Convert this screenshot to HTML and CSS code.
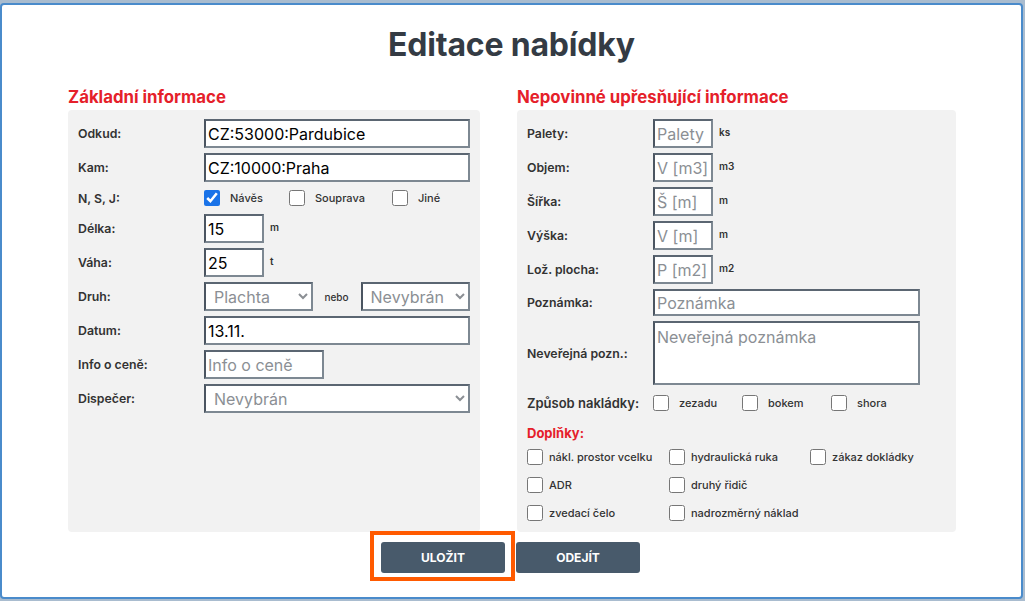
FILE: index.html
```html
<!DOCTYPE html>
<html lang="cs">
<head>
  <meta charset="UTF-8">
  <title>Editace nabídky</title>
  <link rel="stylesheet" href="styles.css">
</head>
<body>

  <div class="modal">
    <h1 class="modal-title">Editace nabídky</h1>

    <div class="columns">

      <!-- Základní informace -->
      <section class="column">
        <h2 class="section-title">Základní informace</h2>
        <div class="panel panel-left">
          <div class="row">
            <label class="label">Odkud:</label>
            <input class="field wide" type="text" value="CZ:53000:Pardubice">
          </div>
          <div class="row">
            <label class="label">Kam:</label>
            <input class="field wide" type="text" value="CZ:10000:Praha">
          </div>
          <div class="row row-check">
            <label class="label">N, S, J:</label>
            <label class="check c-naves"><input type="checkbox" checked><span>Návěs</span></label>
            <label class="check c-souprava"><input type="checkbox"><span>Souprava</span></label>
            <label class="check"><input type="checkbox"><span>Jiné</span></label>
          </div>
          <div class="row">
            <label class="label">Délka:</label>
            <input class="field small" type="text" value="15">
            <span class="unit">m</span>
          </div>
          <div class="row">
            <label class="label">Váha:</label>
            <input class="field small" type="text" value="25">
            <span class="unit">t</span>
          </div>
          <div class="row">
            <label class="label">Druh:</label>
            <select class="field select half"><option>Plachta</option></select>
            <span class="nebo">nebo</span>
            <select class="field select half"><option>Nevybrán</option></select>
          </div>
          <div class="row">
            <label class="label">Datum:</label>
            <input class="field wide" type="text" value="13.11.">
          </div>
          <div class="row">
            <label class="label">Info o ceně:</label>
            <input class="field medium" type="text" placeholder="Info o ceně">
          </div>
          <div class="row">
            <label class="label">Dispečer:</label>
            <select class="field select wide"><option>Nevybrán</option></select>
          </div>
        </div>
      </section>

      <!-- Nepovinné informace -->
      <section class="column">
        <h2 class="section-title">Nepovinné upřesňující informace</h2>
        <div class="panel panel-right">
          <div class="row">
            <label class="label">Palety:</label>
            <input class="field small" type="text" placeholder="Palety">
            <span class="unit">ks</span>
          </div>
          <div class="row">
            <label class="label">Objem:</label>
            <input class="field small" type="text" placeholder="V [m3]">
            <span class="unit">m3</span>
          </div>
          <div class="row">
            <label class="label">Šířka:</label>
            <input class="field small" type="text" placeholder="Š [m]">
            <span class="unit">m</span>
          </div>
          <div class="row">
            <label class="label">Výška:</label>
            <input class="field small" type="text" placeholder="V [m]">
            <span class="unit">m</span>
          </div>
          <div class="row">
            <label class="label">Lož. plocha:</label>
            <input class="field small" type="text" placeholder="P [m2]">
            <span class="unit">m2</span>
          </div>
          <div class="row">
            <label class="label">Poznámka:</label>
            <input class="field wide note" type="text" placeholder="Poznámka">
          </div>
          <div class="row">
            <label class="label">Neveřejná pozn.:</label>
            <textarea class="field wide area" placeholder="Neveřejná poznámka"></textarea>
          </div>
          <div class="row row-check">
            <label class="label label-big">Způsob nakládky:</label>
            <label class="check c-load"><input type="checkbox"><span>zezadu</span></label>
            <label class="check c-load"><input type="checkbox"><span>bokem</span></label>
            <label class="check"><input type="checkbox"><span>shora</span></label>
          </div>

          <p class="sub-title">Doplňky:</p>
          <div class="extras">
            <label class="check"><input type="checkbox"><span>nákl. prostor vcelku</span></label>
            <label class="check"><input type="checkbox"><span>hydraulická ruka</span></label>
            <label class="check"><input type="checkbox"><span>zákaz dokládky</span></label>
            <label class="check"><input type="checkbox"><span>ADR</span></label>
            <label class="check"><input type="checkbox"><span>druhý řidič</span></label>
            <span></span>
            <label class="check"><input type="checkbox"><span>zvedací čelo</span></label>
            <label class="check"><input type="checkbox"><span>nadrozměrný náklad</span></label>
          </div>
        </div>
      </section>
    </div>

    <div class="actions">
      <div class="btn-wrap">
        <button class="btn" type="submit">ULOŽIT</button>
        <span class="highlight"></span>
      </div>
      <button class="btn" type="button">ODEJÍT</button>
    </div>
  </div>

</body>
</html>
```

FILE: styles.css
```css
* {
  box-sizing: border-box;
}

body {
  margin: 0;
  padding: 3px 0 0 0;
  height: 601px;
  overflow: hidden;
  font-family: 'Inter', 'Noto Sans', sans-serif;
  background: #a9bccf;
  color: #333;
}

.modal {
  width: 1023px;
  height: 596px;
  background: #fff;
  border: 2px solid #4a8bcb;
  border-radius: 4px;
}

.modal-title {
  margin: 0;
  padding-top: 20px;
  text-align: center;
  font-size: 32px;
  line-height: 40px;
  font-weight: 700;
  color: #343b44;
  letter-spacing: -0.2px;
}

.columns {
  display: grid;
  grid-template-columns: 412px 439px;
  column-gap: 37px;
  padding-left: 66px;
  margin-top: 22px;
}

.column {
  display: flex;
  flex-direction: column;
}

.section-title {
  margin: 0 0 3px 0;
  font-size: 16.8px;
  line-height: 20px;
  font-weight: 700;
  color: #e5202a;
}

.panel {
  height: 422px;
  background: #f2f2f2;
  border-radius: 4px;
  padding: 9px 10px 0 10px;
  display: flex;
  flex-direction: column;
  gap: 5px;
}

.row {
  display: flex;
  align-items: center;
}

.label {
  flex: 0 0 126px;
  font-size: 12.3px;
  font-weight: 600;
  color: #333;
}

.label-big {
  font-size: 13px;
}

.field {
  height: 29px;
  font-family: 'Inter', 'Noto Sans', sans-serif;
  font-size: 16px;
  color: #000;
  background: #fff;
  border: 2px solid #7d8892;
  border-top-color: #5b6672;
  border-left-color: #4b5561;
  border-radius: 0;
  padding: 0 2px;
  outline: none;
}

.field::placeholder {
  color: #8b8f94;
  font-weight: 400;
}

.wide {
  width: 268px;
}

.panel-right .wide {
  width: 267px;
}

.small {
  width: 60px;
}

.medium {
  width: 120px;
}

.half {
  width: 110px;
}

.note {
  height: 27px;
}

.area {
  height: 64px;
  resize: none;
  padding: 4px 2px;
}

.select {
  color: #8b8f94;
  padding: 0 4px;
}

.unit {
  margin-left: 6px;
  font-size: 10px;
  font-weight: 600;
  margin-bottom: 4px;
}

.nebo {
  margin: 0 12px 0 11px;
  font-size: 10px;
  font-weight: 500;
}

.row-check {
  height: 22px;
}

.panel-right .row-check {
  height: 26px;
}

.check {
  display: flex;
  align-items: center;
  font-size: 11px;
  font-weight: 500;
  color: #333;
}

.check input {
  width: 16px;
  height: 16px;
  margin: 0 10px 0 0;
  accent-color: #1a73e8;
}

.c-naves {
  width: 85px;
}

.c-souprava {
  width: 103px;
}

.c-load {
  width: 89px;
}

.sub-title {
  margin: 4px 0 0 0;
  font-size: 13px;
  font-weight: 700;
  color: #e5202a;
}

.extras {
  display: grid;
  grid-template-columns: 142px 141px auto;
  row-gap: 12px;
  margin-top: 3px;
}

.extras .check input {
  margin-right: 6px;
}

.actions {
  display: flex;
  justify-content: center;
  gap: 11px;
  margin-top: 10px;
  padding-right: 2px;
}

.btn-wrap {
  position: relative;
}

.btn {
  width: 124px;
  height: 31px;
  background: #485a6b;
  color: #fff;
  border: none;
  border-radius: 3px;
  font-family: 'Inter', 'Noto Sans', sans-serif;
  font-size: 12px;
  font-weight: 700;
  cursor: pointer;
}

.highlight {
  position: absolute;
  left: -11px;
  top: -11px;
  width: 145px;
  height: 50px;
  border: 4px solid #ff5a00;
  pointer-events: none;
}
```
